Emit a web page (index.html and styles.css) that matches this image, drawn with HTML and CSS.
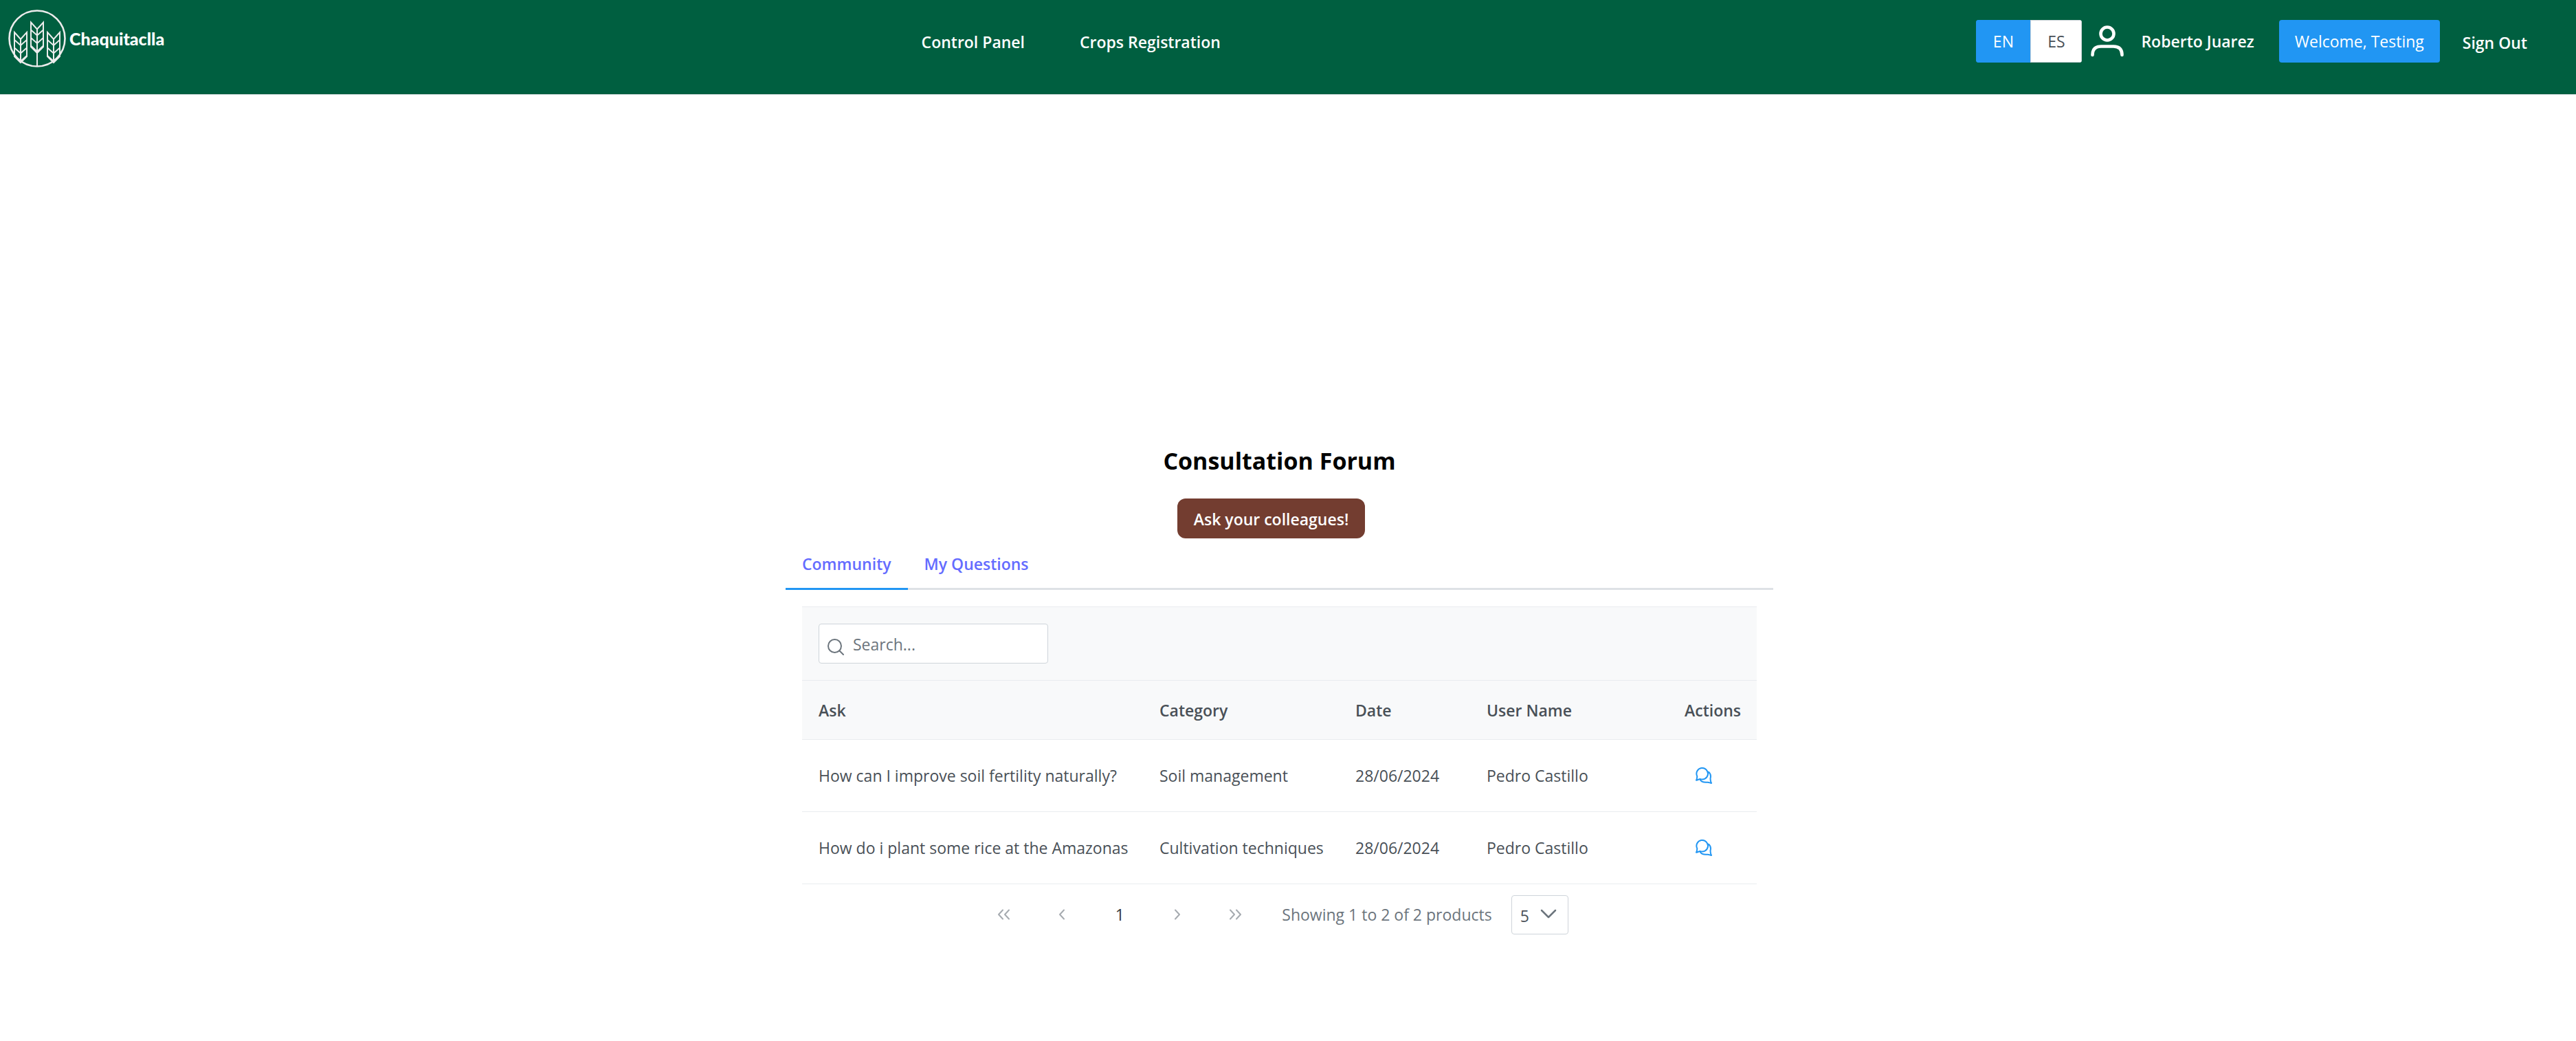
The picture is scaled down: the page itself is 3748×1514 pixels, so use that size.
FILE: index.html
```html
<!DOCTYPE html>
<html lang="en">
<head>
<meta charset="utf-8">
<meta name="viewport" content="width=device-width, initial-scale=1">
<title>Chaquitaclla</title>
<link rel="stylesheet" href="styles.css">
</head>
<body>
<svg class="sprite" aria-hidden="true">
  <symbol id="comments" viewBox="0 0 24 24">
    <g fill="none" stroke="currentColor" stroke-width="2" stroke-linejoin="round" stroke-linecap="round">
      <path d="M1 18.800C2 17 2.300 15 2.300 13A8.300 8.300 0 1 1 6.500 16.900C4.500 17.500 3 18.400 1 18.800Z"/>
      <path d="M19 6.800C22.500 9.800 22.300 13.500 21.500 16.200C21.500 18.500 21.800 20.500 23 23C21 22.700 19.500 21.600 17.500 21.700C12 22.300 8.500 21.400 6.500 17.800"/>
    </g>
  </symbol>
  <symbol id="single" viewBox="0 0 10 16">
    <path d="M8 1.500L2 8L8 14.500" fill="none" stroke="currentColor" stroke-width="2" stroke-linecap="round" stroke-linejoin="round"/>
  </symbol>
  <symbol id="double" viewBox="0 0 20 16">
    <path d="M8 1.500L2 8L8 14.500M17 1.500L11 8L17 14.500" fill="none" stroke="currentColor" stroke-width="2" stroke-linecap="round" stroke-linejoin="round"/>
  </symbol>
</svg>

<header class="topbar">
  <a class="brand" href="#">
    <svg class="brand-mark" viewBox="0 0 84 84" aria-hidden="true">
      <g fill="none" stroke="#ececec" stroke-width="2">
        <circle cx="42" cy="42" r="40.500" stroke-width="2.600"/>
        <path d="M33 18.500L42 28.500L51 18.500V54L42 63L33 54Z"/>
        <path d="M33 29.500L42 37.500L51 29.500M33 41L42 49L51 41M33 52.500L42 61L51 52.500M42 28V83"/>
        <path d="M9 33L18 43L27 33V68L18 77L9 68Z"/>
        <path d="M9 44L18 52L27 44M9 55.500L18 63.500L27 55.500M9 67L18 75L27 67M18 43V76"/>
        <path d="M57 33L66 43L75 33V68L66 77L57 68Z"/>
        <path d="M57 44L66 52L75 44M57 55.500L66 63.500L75 55.500M57 67L66 75L75 67M66 43V76"/>
      </g>
    </svg>
    <span class="brand-name">Chaquitaclla</span>
  </a>
  <nav class="menu" aria-label="Main">
    <a href="#">Control Panel</a>
    <a href="#">Crops Registration</a>
  </nav>
  <div class="account">
    <div class="languages" role="group" aria-label="Language">
      <button class="language language-active" type="button" aria-pressed="true">EN</button>
      <button class="language" type="button" aria-pressed="false">ES</button>
    </div>
    <svg class="avatar" viewBox="0 0 48 48" aria-hidden="true">
      <g fill="none" stroke="#fff" stroke-width="4.600" stroke-linecap="round">
        <circle cx="24" cy="13" r="9.500"/>
        <path d="M2.500 44C2.500 35 7.500 31.500 15 31.500H33C40.500 31.500 45.500 35 45.500 44"/>
      </g>
    </svg>
    <span class="user">Roberto Juarez</span>
    <button class="welcome" type="button">Welcome, Testing</button>
    <a class="sign-out" href="#">Sign Out</a>
  </div>
</header>

<main class="forum">
  <h1 class="title">Consultation Forum</h1>
  <button class="ask" type="button">Ask your colleagues!</button>
  <nav class="tabs" aria-label="Questions">
    <a class="tab tab-active" href="#community" aria-current="page">Community</a>
    <a class="tab" href="#mine">My Questions</a>
  </nav>
  <section class="panel" id="community">
    <div class="toolbar">
      <label class="search">
        <svg class="search-icon" viewBox="0 0 24 24" aria-hidden="true">
          <g fill="none" stroke="currentColor" stroke-width="2" stroke-linecap="round"><circle cx="10.500" cy="10.500" r="9.500"/><path d="M17.500 17.500L23 23"/></g>
        </svg>
        <input class="search-field" type="text" placeholder="Search..." aria-label="Search">
      </label>
    </div>
    <table class="questions">
      <colgroup><col class="col-ask"><col class="col-category"><col class="col-date"><col class="col-user"><col></colgroup>
      <thead>
        <tr><th scope="col">Ask</th><th scope="col">Category</th><th scope="col">Date</th><th scope="col">User Name</th><th scope="col">Actions</th></tr>
      </thead>
      <tbody>
        <tr>
          <td>How can I improve soil fertility naturally?</td><td>Soil management</td><td>28/06/2024</td><td>Pedro Castillo</td>
          <td><button class="reply" type="button" aria-label="View answers"><svg class="reply-icon"><use href="#comments"/></svg></button></td>
        </tr>
        <tr>
          <td>How do i plant some rice at the Amazonas</td><td>Cultivation techniques</td><td>28/06/2024</td><td>Pedro Castillo</td>
          <td><button class="reply" type="button" aria-label="View answers"><svg class="reply-icon"><use href="#comments"/></svg></button></td>
        </tr>
      </tbody>
    </table>
    <div class="pager">
      <button class="page" type="button" aria-label="First page"><svg class="arrow-double"><use href="#double"/></svg></button>
      <button class="page" type="button" aria-label="Previous page"><svg class="arrow"><use href="#single"/></svg></button>
      <button class="page page-current" type="button" aria-current="page">1</button>
      <button class="page" type="button" aria-label="Next page"><svg class="arrow flipped"><use href="#single"/></svg></button>
      <button class="page" type="button" aria-label="Last page"><svg class="arrow-double flipped"><use href="#double"/></svg></button>
      <span class="summary">Showing 1 to 2 of 2 products</span>
      <span class="page-size">
        <select class="page-size-field" aria-label="Rows per page"><option>5</option><option>10</option></select>
        <svg class="chevron" viewBox="0 0 24 14" aria-hidden="true"><path d="M2 2L12 12L22 2" fill="none" stroke="currentColor" stroke-width="2.500" stroke-linecap="round" stroke-linejoin="round"/></svg>
      </span>
    </div>
  </section>
</main>
</body>
</html>
```
FILE: styles.css
```css
* {
  box-sizing: border-box;
}

body {
  margin: 0;
  background: #fff;
  color: #495057;
  font: 23px/36px "Open Sans", "Noto Sans", sans-serif;
}

button,
input,
select {
  font: inherit;
  color: inherit;
}

button {
  border: 0;
  padding: 0;
  cursor: pointer;
}

a {
  text-decoration: none;
}

.sprite {
  position: absolute;
  width: 0;
  height: 0;
}

/* Top bar */
.topbar {
  display: flex;
  justify-content: space-between;
  align-items: flex-start;
  min-height: 138px;
  padding: 14px 71px 0 12px;
  background: #005f40;
  border-bottom: 1px solid #dee2e6;
  color: #fff;
  font-weight: 600;
}

.brand {
  display: flex;
  align-items: center;
  gap: 5px;
  width: 229px;
  color: #fff;
}

.brand-mark {
  flex: none;
  width: 84px;
  height: 84px;
}

.brand-name {
  font: 900 25px/30px Lato, sans-serif;
}

.menu {
  display: flex;
  gap: 80px;
  padding-top: 29px;
}

.menu a,
.sign-out {
  color: #fff;
}

.account {
  display: flex;
  align-items: center;
  padding-top: 15px;
}

.languages {
  display: flex;
  overflow: hidden;
  border-radius: 4px;
}

.language {
  width: 75px;
  height: 62px;
  background: #fff;
  border: 1px solid #ced4da;
  color: #495057;
  font-weight: 400;
}

.language-active {
  width: 79px;
  background: #2196f3;
  border-color: #2196f3;
  color: #fff;
}

.avatar {
  width: 48px;
  height: 48px;
  margin: 0 25px 0 13px;
}

.welcome {
  height: 62px;
  width: 234px;
  margin: 0 33px 0 36px;
  border-radius: 4px;
  background: #2196f3;
  color: #fff;
  font-weight: 400;
  white-space: nowrap;
}

.sign-out {
  padding-top: 4px;
}

/* Forum */
.forum {
  display: flex;
  flex-direction: column;
  align-items: center;
  width: 1437px;
  max-width: 100%;
  margin-inline: calc(50% - 731px) auto;
  padding: 508px 0 48px;
}

.title {
  margin: 0;
  color: #000;
  font-size: 34px;
  line-height: 48px;
  font-weight: 700;
}

.ask {
  height: 58px;
  margin: 31px 24px 0 0;
  padding: 2px 24px 0;
  border-radius: 12px;
  background: #733d30;
  color: #fff;
  font-weight: 600;
}

.tabs {
  display: flex;
  align-self: stretch;
  height: 75px;
  border-bottom: 3px solid #dee2e6;
}

.tab {
  height: 75px;
  padding: 19px 24px 0;
  border-bottom: 3px solid transparent;
  color: #646cff;
  font-weight: 600;
}

.tab-active {
  border-color: #2196f3;
}

.panel {
  align-self: stretch;
  padding: 24px;
}

.toolbar {
  padding: 24px;
  background: #f8f9fa;
  border: solid #e9ecef;
  border-width: 1px 0;
}

.search {
  display: flex;
  align-items: center;
  width: 334px;
  height: 58px;
  padding: 2px 12px 0;
  gap: 13px;
  background: #fff;
  border: 1px solid #ced4da;
  border-radius: 4px;
  color: #6c757d;
}

.search-icon {
  flex: none;
  width: 24px;
  height: 24px;
  margin-top: 8px;
}

.search-field {
  flex: 1;
  min-width: 0;
  padding: 0;
  border: 0;
  outline: 0;
  background: none;
}

.search-field::placeholder {
  color: #6c757d;
  opacity: 1;
}

.questions {
  width: 100%;
  border-collapse: collapse;
  table-layout: fixed;
}

.col-ask { width: 496px; }
.col-category { width: 285px; }
.col-date { width: 191px; }
.col-user { width: 288px; }

.questions th,
.questions td {
  padding: 0 24px;
  border-bottom: 1px solid #e9ecef;
  text-align: left;
  white-space: nowrap;
}

.questions th {
  height: 85px;
  padding-top: 2px;
  background: #f8f9fa;
  font-weight: 600;
}

.questions td {
  height: 105px;
}

.reply {
  display: flex;
  padding: 0 16px;
  background: none;
  color: #2196f3;
}

.reply-icon {
  width: 24px;
  height: 24px;
}

/* Pager */
.pager {
  display: flex;
  align-items: center;
  justify-content: center;
  gap: 12px;
  padding: 16px 16px 0 0;
}

.page {
  display: flex;
  align-items: center;
  justify-content: center;
  width: 72px;
  height: 56px;
  background: none;
  color: #a6abb0;
}

.page-current {
  color: #343a40;
}

.arrow {
  width: 10px;
  height: 16px;
}

.arrow-double {
  width: 20px;
  height: 16px;
}

.flipped {
  transform: scaleX(-1);
}

.summary {
  padding: 0 16px 0 20px;
  color: #6c757d;
}

.page-size {
  position: relative;
}

.page-size-field {
  display: block;
  appearance: none;
  width: 83px;
  height: 57px;
  padding: 4px 12px 0;
  background: #fff;
  border: 1px solid #ced4da;
  border-radius: 4px;
}

.chevron {
  position: absolute;
  top: 20px;
  right: 17px;
  width: 24px;
  height: 14px;
  color: #6c757d;
  pointer-events: none;
}
```
